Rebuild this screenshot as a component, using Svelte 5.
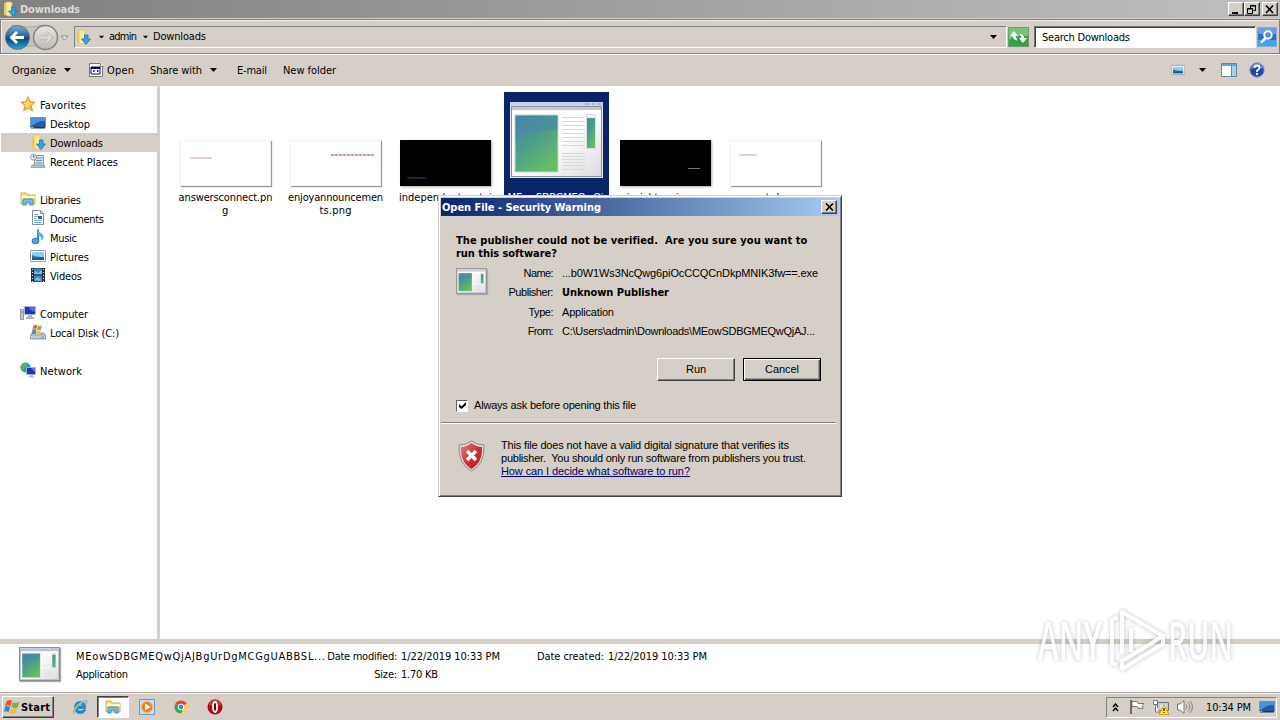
<script>
  const toolbar = [
    { label: 'Organize', width: 44, caret: true },
    { label: 'Open', width: 27, icon: 'window' },
    { label: 'Share with', width: 52, caret: true },
    { label: 'E-mail', width: 30 },
    { label: 'New folder', width: 53 }
  ];

  const tree = [
    { label: 'Favorites', icon: 'star', width: 46, children: [
      { label: 'Desktop', icon: 'desktop', width: 40 },
      { label: 'Downloads', icon: 'downloads', width: 53, selected: true },
      { label: 'Recent Places', icon: 'recent', width: 68 }
    ] },
    { label: 'Libraries', icon: 'library', width: 41, children: [
      { label: 'Documents', icon: 'document', width: 54 },
      { label: 'Music', icon: 'music', width: 27 },
      { label: 'Pictures', icon: 'picture', width: 39 },
      { label: 'Videos', icon: 'video', width: 32 }
    ] },
    { label: 'Computer', icon: 'computer', width: 48, children: [
      { label: 'Local Disk (C:)', icon: 'disk', width: 69 }
    ] },
    { label: 'Network', icon: 'network', width: 42, children: [] }
  ];

  const files = [
    { kind: 'answers', lines: [['answersconnect.pn', 94], ['g', 7]] },
    { kind: 'enjoy', lines: [['enjoyannouncemen', 95], ['ts.png', 32]] },
    { kind: 'independent', dark: true, lines: [['independentcontai', 93]] },
    { kind: 'app', selected: true, lines: [['MEowSDBGMEQwQj', 96]] },
    { kind: 'insight', dark: true, lines: [['insightpanic.png', 78]] },
    { kind: 'portal', lines: [['portal.png', 54]] }
  ];

  const details = [
    { label: 'Name:', value: '...b0W1Ws3NcQwg6piOcCCQCnDkpMNIK3fw==.exe', lw: 30, width: 256 },
    { label: 'Publisher:', value: 'Unknown Publisher', lw: 45, width: 107, bold: true },
    { label: 'Type:', value: 'Application', lw: 25, width: 52 },
    { label: 'From:', value: 'C:\\Users\\admin\\Downloads\\MEowSDBGMEQwQjAJ...', lw: 26, width: 253 }
  ];

  // Spread the letters so that a label takes up its nominal width
  function fit(node, width) {
    const natural = node.getBoundingClientRect().width;
    const gaps = Math.max(node.textContent.length - 1, 1);
    node.style.letterSpacing = `${(width - natural) / gaps}px`;
    node.style.width = `${width}px`;
  }
</script>

{#snippet text(value, width)}<span class="text" use:fit={width}>{value}</span>{/snippet}

{#snippet caret()}<svg class="caret" width="7" height="4" viewBox="0 0 7 4"><path d="M0 0h7L3.5 4z" /></svg>{/snippet}

{#snippet appWindow(width, height)}
  <svg {width} {height} viewBox="0 0 93 76" preserveAspectRatio="none">
    <defs>
      <linearGradient id="appGreen" x1="0" y1="0" x2=".6" y2="1"><stop stop-color="#4a86a8" /><stop offset=".5" stop-color="#4b9c8c" /><stop offset="1" stop-color="#66bd62" /></linearGradient>
      <linearGradient id="appPane" x1="0" y1="0" x2="1" y2="1"><stop offset=".5" stop-color="#fff" /><stop offset="1" stop-color="#dcdce0" /></linearGradient>
    </defs>
    <rect width="93" height="76" fill="#e3e8f2" />
    <path d="M0 0h93v4H0z" fill="#c6d3e8" />
    <path d="M75 2h4m3 0h3m3 0h3" stroke="#8a9abd" />
    <rect x="1.5" y="4.5" width="90" height="70" fill="url(#appPane)" stroke="#8791a3" />
    <path d="M2 5h89v3H2z" fill="#c6c6ca" />
    <rect x="5" y="13" width="43" height="57" fill="url(#appGreen)" stroke="#c1dccb" />
    <path d="M5.500 39Q18 27 47.500 28V13.500H5.500z" fill="#4d7fb0" opacity=".4" />
    <path d="M52 15.500h23M52 19.500h23M52 23.500h23M52 27.500h23M52 31.500h23M52 35.500h23M52 39.500h23M52 43.500h23M52 51.500h23M52 54.500h23M52 57.500h23M52 60.500h23M52 63.500h23M52 67.500h23" stroke="#d9d9dc" />
    <rect x="76.500" y="12.500" width="9" height="34" fill="url(#appGreen)" stroke="#d7dfe6" />
    <path d="M77 13h8v3h-8z" fill="#f1f6ff" />
  </svg>
{/snippet}

{#snippet icon(name)}
  <svg class="icon" width="16" height="16" viewBox="0 0 16 16" fill="none">
    {#if name === 'downloads'}
      <path d="M2 2l5-1v14l-5-1z" fill="#edc95d" />
      <path d="M4 1h5l1 1v13H6L4 14z" fill="#fae99c" stroke="#e4bc54" stroke-width=".7" />
      <path d="M9.500 6h3.500v4h2.500L11 15.500 6.500 10h3z" fill="#35a1df" stroke="#1976b6" stroke-width=".8" />
    {:else if name === 'star'}
      <path d="M8 .8l2 5 5.200.3-4 3.500 1.400 5.400L8 12l-4.500 3 1.300-5.400-4-3.500L6 5.800z" fill="#ffb52c" stroke="#e5842a" stroke-width=".8" />
      <path d="M8 3l1 4 4 .2-4 2.300-1 2-3-1 1-2-2.500-1.700 3-.5z" fill="#ffe566" />
    {:else if name === 'desktop' || name === 'show'}
      <path d="M.5 2.500h15v9.500H.5z" fill="#2457ae" stroke="#6f8eb8" />
      <path d="M1 3h14v3Q7 6 2 11H1z" fill="#4b91df" />
      <path d="M1 12.500h14" stroke="#12385f" stroke-width="2" /><path d="M1.500 12.500h2" stroke="#6be29c" />
    {:else if name === 'recent'}
      <path d="M4.500 2.500h9v11h-9z" fill="#d5e0e8" stroke="#8699a9" />
      <path d="M6 5h6M6 7.500h6M6 10h6" stroke="#6d8ba4" />
      <path d="M2 12h12l1 2.500H1z" fill="#aebfcd" stroke="#8093a3" stroke-width=".7" />
      <circle cx="3.500" cy="4" r="3" fill="#f2f5f7" stroke="#8a9ca8" /><path d="M3.500 2v2h1.500" stroke="#45637a" />
    {:else if name === 'library'}
      <path d="M1 13V2h5l1 2h8v9z" fill="#f7e38e" stroke="#d2aa4a" />
      <path d="M1.500 6H15" stroke="#fff7c2" stroke-width="2" />
      <path d="M3 14V9q0-1 1-1h8q1 0 1 1v5h-3v-3H6v3z" fill="#79bfe6" stroke="#398bba" />
    {:else if name === 'document'}
      <path d="M2.500 .5h8l3 3v11h-11z" fill="#fff" stroke="#7b91a8" /><path d="M10.500 .5v3h3" stroke="#7b91a8" />
      <path d="M4 4.500h4M4 6.500h4M4 8.500h3M4 10.500h8M4 12.500h8" stroke="#86a8cc" /><path d="M8 6h4v3H8z" fill="#35688b" />
    {:else if name === 'music'}
      <path d="M8 1v11" stroke="#2e87c8" stroke-width="2" /><path d="M7.500 0q1 4 4.500 5 2.500 3 0 6 .5-4-4.500-5z" fill="#57b7e8" stroke="#2e87c8" stroke-width=".5" />
      <ellipse cx="5.500" cy="12" rx="3.500" ry="2.800" fill="#49a9df" stroke="#267cbf" />
    {:else if name === 'picture'}
      <path d="M.5 2.500h15v11H.5z" fill="#fff" stroke="#8ca1b0" /><path d="M2 4h12v8H2z" fill="#8bd0ed" />
      <path d="M2 7q4 2 12 2v3H2z" fill="#397b7c" /><path d="M2 10q6-1 12 0v2H2z" fill="#1d579b" />
    {:else if name === 'video'}
      <path d="M1 1h14v14H1z" fill="#262f39" /><path d="M4 1.500h8v6H4zM4 8.500h8v6H4z" fill="#3c88bd" />
      <path d="M5 4l3 2 4-3v4H4zM4 13l4-3 4 4z" fill="#84bdcb" /><path d="M2.500 2v13M13.500 2v13" stroke="#e7ecef" stroke-dasharray="1 2" />
    {:else if name === 'computer'}
      <path d="M.5 4.500h3v10h-3z" fill="#c5cbd0" stroke="#8d979f" /><path d="M1 7h2" stroke="#4bad51" />
      <path d="M4.500 1.500h11v8h-11z" fill="#1b35bc" stroke="#b0bac7" /><path d="M9 2h6v5Q10 6 9 2z" fill="#526be1" />
      <path d="M8 10h4v2h2v2H6v-2h2z" fill="#aab4c0" />
    {:else if name === 'disk'}
      <path d="M2 9h12l2 3v3H0v-3z" fill="#a9bdc9" stroke="#718999" stroke-width=".7" /><path d="M1 13h14" stroke="#deebf3" /><path d="M11 13h3" stroke="#3db45a" />
      <path d="M3.500 1.500q2-1.500 4 0L6.500 5Q4.500 4 2.500 5z" fill="#ef6234" /><path d="M8 1.500q2 1.500 4 0l-1 4q-2 1-4 0z" fill="#7dba3d" />
      <path d="M2.500 5.500q2-1 4 0L5.500 10h-4z" fill="#438ed1" /><path d="M7 6q2 1 4 0l-1 4q-2 1-4 0z" fill="#f3c23b" />
    {:else if name === 'network'}
      <circle cx="5.500" cy="5.500" r="5" fill="#2696c8" /><path d="M2 2l4-1 2 2-3 2-2 5-3-5zM6 7l3-1v5z" fill="#63b54d" />
      <path d="M6.500 5.500h9v7h-9z" fill="#1836b5" stroke="#a6b4c5" /><path d="M11 6h4v4z" fill="#5e7cdf" /><path d="M10 13h3v1h1v1.500H9V14h1z" fill="#b8c0ca" />
    {:else if name === 'window'}
      <path d="M1 1h11l3 3v11H1z" fill="#fff" /><path d="M1.500 15V1.500H12M12.500 1.500v3h3M14.500 5v9.500H2" stroke="#747474" />
      <path d="M3 5h9v7H3z" fill="#fff" stroke="#000075" /><path d="M3 6h9" stroke="#000075" stroke-width="2" /><path d="M5 9h2M9 9h2M5.500 10v-2M9.500 10v-2" stroke="#26268d" />
    {:else if name === 'pane'}
      <path d="M.5 1.500h15v13H.5z" fill="#fff" stroke="#5289aa" /><path d="M1 2h14v2H1z" fill="#6aa6c9" /><path d="M11 4h4v10h-4z" fill="#a7d2e9" /><path d="M10.500 2v12" stroke="#518bab" />
    {:else if name === 'help'}
      <circle cx="8" cy="8" r="7.200" fill="#2647ac" stroke="#8b98bd" /><path d="M2 7a6 6 0 0112 0Q8 3 2 7" fill="#688ade" />
      <path d="M5.500 6q0-2.500 2.500-2.500T10.500 6Q10.500 7.300 8 8.500V10M8 11v2" stroke="#fff" stroke-width="1.800" />
    {:else if name === 'ie'}
      <path d="M13.500 9.500H5q.5 2.500 3.500 2.500 2 0 3-1.200h2.200q-1.200 3.700-5.200 3.700-6 0-6-6t6-6q5.500 0 5 7M5 7h5.500Q10 4.700 7.800 4.700T5 7" fill="#218bd5" stroke="#1676ba" stroke-width=".7" fill-rule="evenodd" />
      <path d="M2 15.500Q-1 13 4 7t10-6q3 1 0 5 1-4-2-3-4 2-7 6t-3 6" fill="#55b9ec" /><path d="M2 14Q1 10 6 6t8-4" stroke="#f1ca44" />
    {:else if name === 'wmp'}
      <path d="M.5.500h15v15H.5z" fill="#c4def4" stroke="#5c9cca" /><circle cx="8" cy="8" r="5.500" fill="#f47b16" stroke="#ffb555" /><path d="M6 4.500l5.500 3.500L6 11.500z" fill="#fff" />
    {:else if name === 'chrome'}
      <circle cx="8" cy="8" r="6.500" fill="#ffd33f" /><path d="M8 8L2.400 4.700A6.500 6.500 0 0113.600 4.700z" fill="#e54334" /><path d="M8 8L2.400 4.700A6.500 6.500 0 008 14.500l2.500-5z" fill="#36a852" />
      <circle cx="8" cy="8" r="3.200" fill="#fff" /><circle cx="8" cy="8" r="2.400" fill="#4285e8" />
    {:else if name === 'opera'}
      <circle cx="8" cy="8" r="7.500" fill="#a90d16" /><path d="M2 6a6 6 0 0112 0Q8 10 2 6" fill="#dc464a" opacity=".7" /><ellipse cx="8" cy="8" rx="2" ry="5" fill="#650006" stroke="#fff" stroke-width="1.800" />
    {:else if name === 'flag'}
      <path d="M2 1v14" stroke="#6c6c6c" stroke-width="2" /><path d="M3 2.500h5l1 2h6l-2 2 1 3-5-.5-1-1.500H3z" fill="#fff" stroke="#777" />
    {:else if name === 'lan'}
      <path d="M4.500 3.500h11v8h-11z" fill="#c7c9c9" stroke="#6c7173" /><path d="M7 6h6v3H7z" fill="#e5e8e9" /><path d="M.5 1.500h4v4h-4zM2.500 5v8H7v2" fill="#fff" stroke="#777" />
      <path d="M11 6l5 9.500H6z" fill="#ffe344" stroke="#d7a500" /><path d="M11 9v3m0 1v1" stroke="#332900" stroke-width="1.300" />
    {:else if name === 'sound'}
      <path d="M.5 5h2.500l4-3.500v13L3 11H.5z" fill="#fff" stroke="#777" /><path d="M9 5.500q2 2.500 0 5M11 3.500q4 4.500 0 9M13 2q5 6 0 12" stroke="#858585" />
    {/if}
  </svg>
{/snippet}

<div class="desktop">
  <header class="titlebar">
    {@render icon('downloads')}
    <b>{@render text('Downloads', 60)}</b>
    <div class="window-buttons">
      <button aria-label="Minimize"><svg width="10" height="9"><path d="M1 7h6v2H1z" /></svg></button>
      <button aria-label="Restore"><svg width="10" height="9" fill="none" stroke="#000"><path d="M3.500 3V.5h5v5H6M3 1h6M.5 3.500h5v5h-5zM0 4h6" /></svg></button>
      <button class="last" aria-label="Close"><svg width="10" height="9" fill="none" stroke="#000" stroke-width="1.600"><path d="M1 .5l7 7.500M8 .5L1 8" /></svg></button>
    </div>
  </header>

  <nav class="address-row">
    <svg class="travel" width="68" height="30" viewBox="0 0 68 30">
      <defs>
        <linearGradient id="backBlue" x1="0" y1="0" x2="0" y2="1"><stop stop-color="#84aecb" /><stop offset=".48" stop-color="#1c6298" /><stop offset=".52" stop-color="#064577" /><stop offset="1" stop-color="#29aae1" /></linearGradient>
        <linearGradient id="forwardGray" x1="0" y1="0" x2="0" y2="1"><stop stop-color="#e9e7e4" /><stop offset="1" stop-color="#bcb9b5" /></linearGradient>
      </defs>
      <path d="M10 3Q26 7 42 3L53 13l-9 13Q29 21 14 27z" fill="#c7c4c0" stroke="#aaa7a4" />
      <circle cx="15.500" cy="15.500" r="12" fill="url(#backBlue)" stroke="#5f7182" />
      <path d="M22 15.500H10m5-5.500l-5.500 5.500L15 21" fill="none" stroke="#fff" stroke-width="2.800" />
      <circle cx="43.500" cy="15.500" r="12" fill="url(#forwardGray)" stroke="#85827e" stroke-width="1.500" />
      <path d="M37 15.500h12m-5-5l5 5-5 5" fill="none" stroke="#aaa7a3" stroke-width="3.400" /><path d="M37 15.500h12m-5-5l5 5-5 5" fill="none" stroke="#dedbd7" stroke-width="2.300" />
      <path d="M59 14h7l-3.500 4z" fill="#eee" stroke="#8e8b87" />
    </svg>
    <div class="address">
      {@render icon('downloads')}
      <i class="crumb-caret first">{@render caret()}</i>
      {@render text('admin', 28)}
      <i class="crumb-caret">{@render caret()}</i>
      {@render text('Downloads', 53)}
      <i class="drop">{@render caret()}</i>
    </div>
    <svg class="refresh" width="21" height="20" viewBox="0 0 21 20">
      <rect x=".5" y=".5" width="20" height="19" fill="#35a045" stroke="#6b9f6e" /><path d="M1 1h19v8Q8 7 1 13z" fill="#74c577" />
      <path d="M6 4l-4 5h2.500q1 4 5 4.500L7.500 9H10zM15 16l4-5h-2.500q-1-4-5-4.500l2 4.500H11z" fill="#fff" />
    </svg>
    <div class="search">{@render text('Search Downloads', 88)}</div>
    <svg class="search-button" width="20" height="20" viewBox="0 0 20 20">
      <rect x=".5" y=".5" width="19" height="19" fill="#2d6dce" stroke="#8ca9d0" /><path d="M1 13h18v6H1z" fill="#37a8e9" /><path d="M1 1h18v6H1z" fill="#6c9ce4" />
      <circle cx="11" cy="8" r="3.700" fill="#548bd9" stroke="#fff" stroke-width="1.900" /><path d="M8.500 11L4 15.500" stroke="#fff" stroke-width="2.500" />
    </svg>
  </nav>

  <div class="toolbar">
    {#each toolbar as item}
      <div class="tool">
        {#if item.icon}{@render icon(item.icon)}{/if}
        {@render text(item.label, item.width)}
        {#if item.caret}{@render caret()}{/if}
      </div>
    {/each}
    <div class="view-tools">
      <span class="view-icon">{@render icon('picture')}</span>
      {@render caret()}
      {@render icon('pane')}
      {@render icon('help')}
    </div>
  </div>

  <main>
    <aside>
      {#each tree as group}
        <section>
          <div class="node">{@render icon(group.icon)}{@render text(group.label, group.width)}</div>
          {#each group.children as child}
            <div class="node child" class:selected={child.selected}>{@render icon(child.icon)}{@render text(child.label, child.width)}</div>
          {/each}
        </section>
      {/each}
    </aside>
    <div class="files">
      {#each files as file}
        <div class="file" class:selected={file.selected}>
          <div class="preview">
            {#if file.kind === 'app'}
              {@render appWindow(93, 76)}
            {:else}
              <div class="thumb {file.kind}" class:dark={file.dark}><i></i></div>
            {/if}
          </div>
          {#each file.lines as [line, width]}
            <div class="file-name">{@render text(line, width)}</div>
          {/each}
        </div>
      {/each}
    </div>
  </main>

  <footer class="details">
    <div class="details-icon">{@render appWindow(39, 32)}</div>
    <div class="details-name">
      {@render text('MEowSDBGMEQwQjAJBgUrDgMCGgUABBSL...', 249)}
      {@render text('Application', 52)}
    </div>
    <dl>
      <dt>{@render text('Date modified:', 70)}</dt><dd>{@render text('1/22/2019 10:33 PM', 99)}</dd>
      <dt>{@render text('Size:', 23)}</dt><dd>{@render text('1.70 KB', 37)}</dd>
    </dl>
    <div class="created">{@render text('Date created:', 67)}{@render text('1/22/2019 10:33 PM', 99)}</div>
  </footer>

  <div class="taskbar">
    <button class="start">
      <svg width="16" height="16" viewBox="0 0 16 16"><path d="M3 2q3-2 5 0L6.500 7.500Q4 5.500 1 7z" fill="#e75129" /><path d="M9 3q3 2 6.500-.5l-2 6q-3 1.500-6-.5z" fill="#76b43d" /><path d="M1 8q3-2 5 .5l-1.500 5Q2.500 11.500 0 13z" fill="#3c81cf" /><path d="M7 9q3 2 6 .5l-1.500 5q-3 1.500-6-.5z" fill="#f4bf2c" /></svg>
      <b>{@render text('Start', 29)}</b>
    </button>
    <div class="pinned">{@render icon('ie')}</div>
    <div class="pinned active">{@render icon('library')}</div>
    <div class="pinned after">{@render icon('wmp')}</div>
    <div class="pinned">{@render icon('chrome')}</div>
    <div class="pinned">{@render icon('opera')}</div>
    <div class="tray">
      <svg class="chevrons" width="7" height="9" fill="none" stroke="#000" stroke-width="1.400"><path d="M1 4l2.500-3L6 4M1 8l2.500-3L6 8" /></svg>
      {@render icon('flag')}
      {@render icon('lan')}
      {@render icon('sound')}
      <span class="clock">{@render text('10:34 PM', 45)}</span>
      {@render icon('show')}
    </div>
  </div>

  <div class="dialog" role="dialog" aria-label="Open File - Security Warning">
    <div class="dialog-title">
      <b>{@render text('Open File - Security Warning', 159)}</b>
      <button aria-label="Close"><svg width="9" height="8" fill="none" stroke="#000" stroke-width="1.600"><path d="M1 .5l7 7M8 .5l-7 7" /></svg></button>
    </div>
    <div class="dialog-body">
      <h1>{@render text('The publisher could not be verified.  Are you sure you want to', 351)}<br />{@render text('run this software?', 101)}</h1>
      <div class="info">
        <div class="exe-icon">{@render appWindow(29, 24)}</div>
        <div class="rows">
          {#each details as row}
            <div class="row">
              <div class="row-label">{@render text(row.label, row.lw)}</div>
              <div class:bold={row.bold}>{@render text(row.value, row.width)}</div>
            </div>
          {/each}
        </div>
      </div>
      <div class="actions">
        <button>{@render text('Run', 20)}</button>
        <button class="default">{@render text('Cancel', 34)}</button>
      </div>
      <div class="ask">
        <span class="check"><svg width="7" height="7" viewBox="0 0 7 7"><path d="M0 2l2.500 2.500L7 0v3L2.500 7 0 5z" /></svg></span>
        {@render text('Always ask before opening this file', 162)}
      </div>
    </div>
    <div class="warning">
      <svg width="27" height="32" viewBox="0 0 27 32">
        <defs><linearGradient id="shieldRed" x1="0" y1="0" x2="1" y2="1"><stop stop-color="#e77b7b" /><stop offset=".5" stop-color="#d13439" /><stop offset="1" stop-color="#ae151c" /></linearGradient></defs>
        <path d="M13.500 1Q19 5 26 5 27 24 13.500 31 0 24 1 5q7 0 12.500-4z" fill="#ddd" stroke="#8d8585" />
        <path d="M13.500 3Q19 7 24 7 25 22 13.500 29 2 22 3 7q5 0 10.500-4z" fill="url(#shieldRed)" />
        <path d="M9 11l9 9M18 11l-9 9" stroke="#fff" stroke-width="3.400" />
      </svg>
      <div>
        {@render text('This file does not have a valid digital signature that verifies its', 288)}<br />
        {@render text('publisher.  You should only run software from publishers you trust.', 305)}<br />
        <a href="#help">{@render text('How can I decide what software to run?', 189)}</a>
      </div>
    </div>
  </div>

  <svg class="watermark" width="204" height="84" viewBox="0 0 204 84">
    <g class="mark-text">
      <text x="3" y="60" textLength="64" lengthAdjust="spacingAndGlyphs">ANY</text>
      <text x="133" y="60" textLength="65" lengthAdjust="spacingAndGlyphs">RUN</text>
    </g>
    <path d="M83 17l-6 3v43l5 2M87 54V12l41 24-41 25v8l41-25v-8M96 28v24" fill="none" stroke="#fff" stroke-width="4" stroke-linejoin="round" />
  </svg>
</div>

<style>
  :global(body) {
    overflow: hidden;
    background: #d5cfc7;
  }

  .desktop {
    --face: #d5cfc7;
    position: relative;
    display: flex;
    flex-direction: column;
    width: 1280px;
    height: 720px;
    overflow: hidden;
    background: var(--face);
    color: #000;
    font: 11px/13px "DejaVu Sans Condensed", "DejaVu Sans", sans-serif;
  }

  .desktop * {
    box-sizing: border-box;
  }

  svg {
    display: block;
    flex: none;
  }

  button {
    padding: 0;
    border: 1px solid;
    border-color: #fff #404040 #404040 #fff;
    border-radius: 0;
    background: var(--face);
    box-shadow: inset -1px -1px #808080;
    color: inherit;
    font: inherit;
  }

  .text {
    display: inline-block;
    flex: none;
    white-space: pre;
  }

  .titlebar {
    display: flex;
    flex: none;
    align-items: center;
    height: 18px;
    padding: 0 2px;
    background: linear-gradient(90deg, #808080, #c0c0c0);
    color: #dedad3;
    line-height: 17px;
  }

  .titlebar b {
    margin-left: 2px;
  }

  .window-buttons {
    display: flex;
    margin-left: auto;
  }

  .window-buttons button {
    display: grid;
    place-items: center;
    width: 16px;
    height: 14px;
  }

  .window-buttons .last {
    margin-left: 2px;
  }

  .address-row {
    display: flex;
    flex: none;
    align-items: center;
    height: 35px;
    margin-top: 1px;
    padding: 0 1px;
    border: 1px solid #808080;
    border-bottom-color: #8b8780;
    box-shadow: 0 1px #fff, inset 1px 1px #f1eeea;
  }

  .address {
    display: flex;
    align-items: center;
    width: 933px;
    height: 22px;
    margin-left: 4px;
    border: 1px solid;
    border-color: #808080 #fff #fff #808080;
  }

  .address .text {
    margin-top: -1px;
  }

  .crumb-caret {
    margin: 0 4px 0 5px;
    transform: scale(0.8);
  }

  .crumb-caret.first {
    margin-left: 7px;
  }

  .drop {
    margin: 0 9px 0 auto;
  }

  .refresh {
    margin-left: 1px;
  }

  .search {
    flex: none;
    width: 222px;
    height: 22px;
    margin-left: 5px;
    padding: 4px 0 0 7px;
    border: 1px solid;
    border-color: #707070 #fff #fff #707070;
    background: #fff;
    box-shadow: inset 1px 1px #404040;
  }

  .search-button {
    margin-left: 1px;
  }

  .toolbar {
    display: flex;
    flex: none;
    align-items: center;
    height: 32px;
    padding: 0 15px 0 12px;
  }

  .tool,
  .view-tools {
    display: flex;
    align-items: center;
  }

  .tool {
    margin-right: 16px;
  }

  .tool:first-child {
    margin-right: 17px;
  }

  .tool .caret {
    margin-left: 8px;
  }

  .tool .icon {
    margin-right: 3px;
  }

  .tool:nth-child(3) {
    margin-right: 20px;
  }

  .view-tools {
    margin-left: auto;
  }

  .view-icon {
    transform: scale(0.84);
  }

  .view-tools .caret {
    margin: 0 15px 0 13px;
  }

  .view-tools > .icon:last-child {
    margin-left: 12px;
  }

  main {
    display: flex;
    flex: none;
    height: 553px;
    background: #fff;
  }

  aside {
    width: 160px;
    padding: 9px 0 0 1px;
    border-right: 3px solid var(--face);
  }

  aside section {
    margin-bottom: 19px;
  }

  .node {
    display: flex;
    gap: 4px;
    align-items: center;
    height: 19px;
    padding-left: 19px;
  }

  .node .icon {
    margin-top: -1px;
  }

  .node .text {
    margin-top: 1px;
  }

  .node.child {
    padding-left: 29px;
  }

  .node.selected {
    background: var(--face);
  }

  .files {
    display: flex;
    gap: 5px;
    align-items: flex-start;
    padding: 6px 0 0 14px;
  }

  .file {
    width: 105px;
    height: 126px;
    text-align: center;
  }

  .file.selected {
    background: #0a246a;
    color: #fff;
  }

  .preview {
    display: flex;
    align-items: flex-end;
    justify-content: center;
    height: 99px;
    padding: 0 2px 5px 0;
  }

  .file.selected .preview {
    padding: 0 1px 13px 0;
  }

  .thumb {
    width: 91px;
    height: 46px;
    border: 1px solid #f0f0f0;
    background: #fff;
    box-shadow: 1px 1px 1px #999;
  }

  .thumb.dark {
    border-color: #000;
    background: #000;
    box-shadow: 1px 1px 2px #aaa;
  }

  .thumb i {
    display: block;
    width: 22px;
    height: 2px;
    margin: 16px 0 0 9px;
    background: #eccace;
  }

  .enjoy i {
    width: 43px;
    margin: 13px 0 0 40px;
    background: repeating-linear-gradient(90deg, #e08ab5 0 3px, #f8dfe9 3px 4px);
  }

  .independent i {
    width: 19px;
    margin: 36px 0 0 6px;
    background: #052e3a;
  }

  .insight i {
    width: 12px;
    height: 1px;
    margin: 27px 0 0 67px;
    background: #777;
  }

  .portal i {
    width: 18px;
    margin: 13px 0 0 8px;
    background: #c9dfdb;
  }

  .file-name {
    height: 13px;
    margin-right: 2px;
  }

  .details {
    display: flex;
    flex: none;
    height: 53px;
    border-top: 5px solid var(--face);
    background: #fff;
  }

  .details-icon {
    width: 41px;
    height: 34px;
    margin: 3px 0 0 19px;
    border: 1px solid #8d8d91;
    box-shadow: 1px 1px 1px #aaa;
  }

  .details-name {
    display: flex;
    flex-direction: column;
    gap: 5px;
    align-items: flex-start;
    padding: 6px 0 0 16px;
  }

  dl {
    display: grid;
    grid-template-columns: 71px 99px;
    gap: 5px 4px;
    align-content: start;
    margin: 0 0 0 1px;
    padding-top: 6px;
  }

  dt {
    height: 13px;
    text-align: right;
  }

  dd {
    height: 13px;
    margin: 0;
  }

  .created {
    display: flex;
    gap: 4px;
    padding: 6px 0 0 37px;
  }

  .taskbar {
    display: flex;
    flex: 1;
    align-items: center;
    padding: 2px 3px 1px 2px;
    border-top: 1px solid #aaa69f;
    box-shadow: inset 0 1px #f7f5f2;
  }

  .start {
    display: flex;
    gap: 1px;
    align-items: center;
    width: 52px;
    height: 22px;
    margin-right: 9px;
    padding-left: 1px;
  }

  .pinned {
    display: grid;
    place-items: center;
    width: 34px;
    height: 22px;
  }

  .pinned.active {
    width: 32px;
    border: 1px solid;
    border-color: #404040 #fff #fff #404040;
    background: #fff;
    box-shadow: inset 1px 1px #808080;
  }

  .pinned.after {
    margin-left: 1px;
  }

  .tray {
    display: flex;
    gap: 8px;
    align-items: center;
    width: 171px;
    height: 21px;
    margin-left: auto;
    padding-left: 5px;
    border: 1px solid;
    border-color: #808080 #fff #fff #808080;
  }

  .chevrons {
    margin-right: 2px;
  }

  .clock {
    margin-left: 5px;
  }

  /* The modal window lies over the explorer */
  .dialog {
    position: absolute;
    top: 195px;
    left: 438px;
    width: 404px;
    height: 302px;
    padding: 1px;
    border: 1px solid;
    border-color: var(--face) #404040 #404040 var(--face);
    background: var(--face);
    box-shadow: inset 1px 1px #fff, inset -1px -1px #808080;
    font-family: "Liberation Sans", Arial, sans-serif;
  }

  .dialog-title {
    display: flex;
    align-items: center;
    justify-content: space-between;
    height: 18px;
    margin: 1px 1px 0;
    padding: 0 2px 0 1px;
    background: linear-gradient(90deg, #0a246a, #a6caf0);
    color: #fff;
    font-family: "DejaVu Sans Condensed", sans-serif;
  }

  .dialog-title button {
    display: grid;
    place-items: center;
    width: 16px;
    height: 14px;
  }

  .dialog-body {
    height: 206px;
    padding: 18px 18px 0 16px;
  }

  h1 {
    margin: 0;
    font: bold 11px/13px "DejaVu Sans Condensed", sans-serif;
  }

  .info {
    display: flex;
    margin-top: 4px;
  }

  .exe-icon {
    width: 31px;
    height: 26px;
    margin-top: 4px;
    border: 1px solid #999;
    box-shadow: 1px 1px 1px #aaa;
  }

  .row {
    display: flex;
    gap: 9px;
    height: 19.330px;
    padding-top: 3px;
  }

  .row-label {
    width: 66px;
    text-align: right;
  }

  .bold {
    font-weight: bold;
    font-family: "DejaVu Sans Condensed", sans-serif;
  }

  .actions {
    display: flex;
    gap: 8px;
    justify-content: flex-end;
    margin: 17px 1px 0 0;
  }

  .actions button {
    width: 78px;
    height: 23px;
  }

  .actions .default {
    border-color: #000;
    box-shadow: inset 1px 1px #fff, inset -1px -1px #555, inset -2px -2px #999;
  }

  .ask {
    display: flex;
    gap: 6px;
    align-items: center;
    margin-top: 18px;
  }

  .check {
    display: grid;
    place-items: center;
    width: 12px;
    height: 12px;
    border: 1px solid;
    border-color: #606060 #fff #fff #606060;
    background: #fff;
  }

  .warning {
    display: flex;
    gap: 16px;
    margin: 0 4px 0 1px;
    padding: 16px 0 0 17px;
    border-top: 1px solid #808080;
    box-shadow: inset 0 1px #fff;
  }

  .warning > svg {
    margin-top: 1px;
  }

  .warning a {
    color: #00006e;
  }

  .warning a .text {
    text-decoration: underline;
  }

  .watermark {
    position: absolute;
    top: 600px;
    left: 1035px;
    overflow: visible;
    filter: drop-shadow(0 0 2px rgba(0, 0, 0, 0.3));
    opacity: 0.82;
  }

  .mark-text {
    fill: #fff;
    font: 600 52px "Open Sans", sans-serif;
  }
</style>
